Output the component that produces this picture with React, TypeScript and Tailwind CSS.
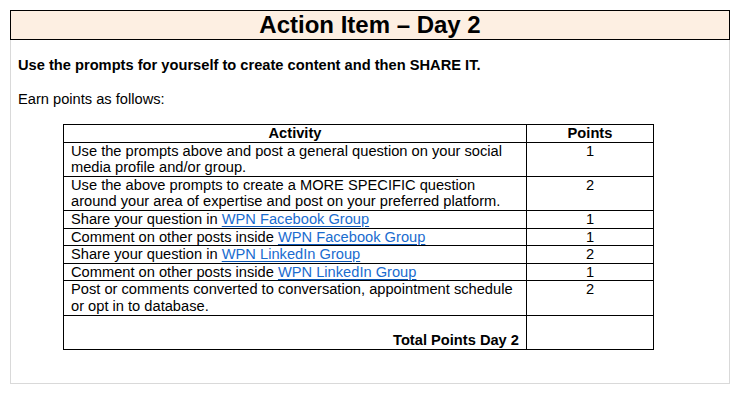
import React from "react";

const Link = ({ children }: { children: React.ReactNode }) => (
  <a href="#" className="text-[#1a6ccf] underline decoration-[#0b57b8] underline-offset-[2px]">
    {children}
  </a>
);

const rows: { activity: React.ReactNode; points: string }[] = [
  {
    activity: "Use the prompts above and post a general question on your social media profile and/or group.",
    points: "1",
  },
  {
    activity: "Use the above prompts to create a MORE SPECIFIC question around your area of expertise and post on your preferred platform.",
    points: "2",
  },
  { activity: <>Share your question in <Link>WPN Facebook Group</Link></>, points: "1" },
  { activity: <>Comment on other posts inside <Link>WPN Facebook Group</Link></>, points: "1" },
  { activity: <>Share your question in <Link>WPN LinkedIn Group</Link></>, points: "2" },
  { activity: <>Comment on other posts inside <Link>WPN LinkedIn Group</Link></>, points: "1" },
  {
    activity: "Post or comments converted to conversation, appointment schedule or opt in to database.",
    points: "2",
  },
];

export default function App() {
  return (
    <div className="w-[739px] h-[399px] bg-white pt-[10px] px-[10px] text-black font-['Liberation_Sans',Arial,sans-serif]">
      <div className="w-[720px] h-[374px] border-x border-b border-[#d9d9d9]">
        {/* Header */}
        <div className="-mx-px h-[30px] border border-black bg-[#fdefe2] flex items-center justify-center">
          <h1 className="text-[24px] font-bold leading-none">Action Item – Day 2</h1>
        </div>

        <div className="pl-[7px] pt-[17px] text-[14.67px] leading-[17px]">
          <p className="font-bold">
            Use the prompts for yourself to create content and then SHARE IT.
          </p>
          <p className="mt-[17px]">Earn points as follows:</p>
        </div>

        <table className="ml-[52px] mt-[16px] w-[590px] table-fixed border-collapse text-[14.67px] leading-[16.6px]">
          <colgroup>
            <col className="w-[463px]" />
            <col className="w-[127px]" />
          </colgroup>
          <thead>
            <tr>
              <th className="border border-black p-0 font-bold text-center">Activity</th>
              <th className="border border-black p-0 font-bold text-center">Points</th>
            </tr>
          </thead>
          <tbody>
            {rows.map((r, i) => (
              <tr key={i}>
                <td className="border border-black py-0 pl-[7px] pr-[6px] align-top">{r.activity}</td>
                <td className="border border-black p-0 text-center align-top">{r.points}</td>
              </tr>
            ))}
            <tr>
              <td className="border border-black h-[34px] p-0 pr-[7px] text-right align-bottom font-bold">
                Total Points Day 2
              </td>
              <td className="border border-black p-0"></td>
            </tr>
          </tbody>
        </table>
      </div>
    </div>
  );
}
